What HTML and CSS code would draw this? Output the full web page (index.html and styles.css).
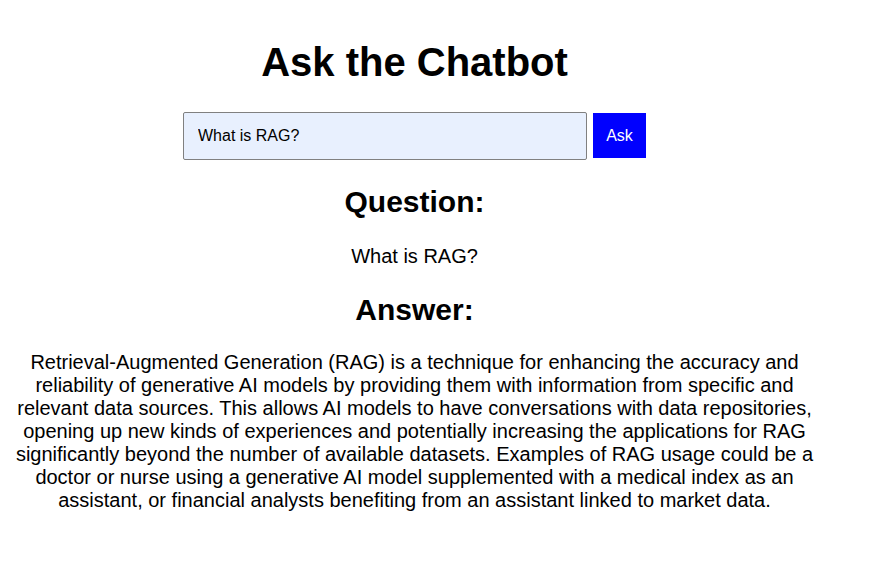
FILE: index.html
```html
<!DOCTYPE html>
<html lang="en">
<head>
<meta charset="utf-8">
<title>Ask the Chatbot</title>
<link rel="stylesheet" href="styles.css">
</head>
<body>
<main class="page">
  <h1 class="title">Ask the Chatbot</h1>
  <form class="ask-form">
    <input class="ask-input" type="text" value="What is RAG?">
    <button class="ask-button" type="button">Ask</button>
  </form>
  <h2 class="section-title question-title">Question:</h2>
  <p class="question-text">What is RAG?</p>
  <h2 class="section-title answer-title">Answer:</h2>
  <p class="answer-text">Retrieval-Augmented Generation (RAG) is a technique for enhancing the accuracy and reliability of generative AI models by providing them with information from specific and relevant data sources. This allows AI models to have conversations with data repositories, opening up new kinds of experiences and potentially increasing the applications for RAG significantly beyond the number of available datasets. Examples of RAG usage could be a doctor or nurse using a generative AI model supplemented with a medical index as an assistant, or financial analysts benefiting from an assistant linked to market data.</p>
</main>
</body>
</html>
```

FILE: styles.css
```css
html, body {
  margin: 0;
  padding: 0;
  background: #ffffff;
}

body {
  font-family: "Liberation Sans", Arial, sans-serif;
  color: #000000;
  font-size: 20px;
}

.page {
  width: 813px;
  padding: 13px 8px 20px 8px;
  text-align: center;
}

.title {
  font-size: 40px;
  font-weight: bold;
  margin: 26.8px 0;
}

.ask-form {
  display: flex;
  justify-content: center;
  align-items: center;
  gap: 6px;
  margin: 0;
}

.ask-input {
  box-sizing: border-box;
  width: 404px;
  height: 48px;
  padding: 0 14px;
  border: 1px solid #808080;
  border-radius: 2px;
  background: #e8f0fe;
  color: #000000;
  font-family: "Liberation Sans", Arial, sans-serif;
  font-size: 16px;
  outline: none;
}

.ask-button {
  box-sizing: border-box;
  width: 53px;
  height: 45px;
  padding: 0;
  border: none;
  background: #0000ff;
  color: #ffffff;
  font-family: "Liberation Sans", Arial, sans-serif;
  font-size: 16px;
  cursor: pointer;
}

.section-title {
  font-size: 30px;
  font-weight: bold;
}

.question-title {
  margin: 25.9px 0;
}

.question-text {
  margin: 25.9px 0 24.9px 0;
}

.answer-title {
  margin: 24.9px 0 0 0;
}

.answer-text {
  margin: 23.4px 0 20px 0;
}
```
